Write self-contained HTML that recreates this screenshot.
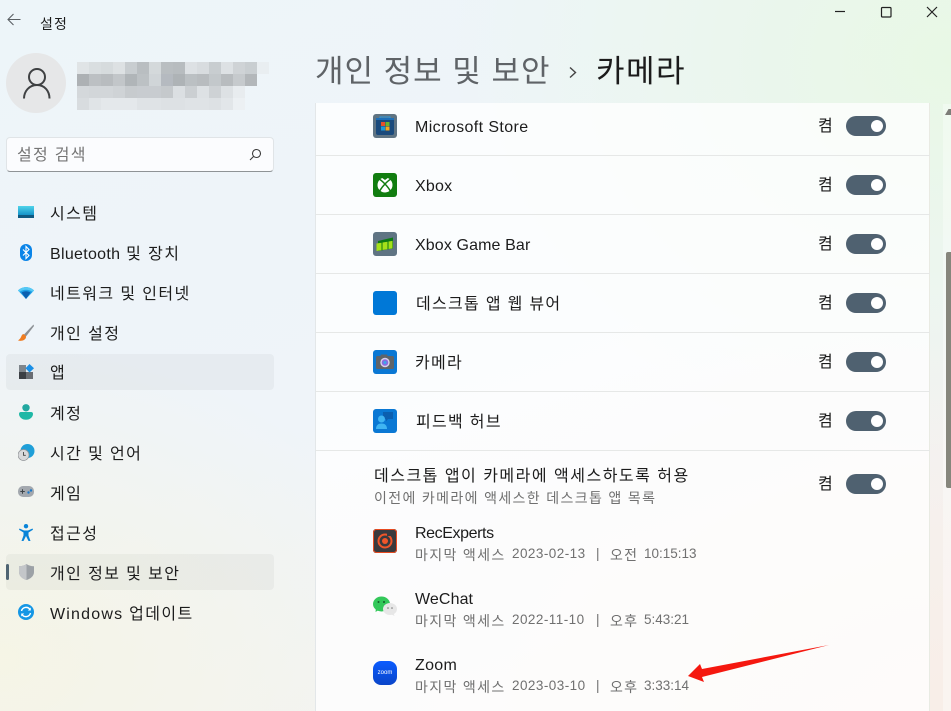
<!DOCTYPE html>
<html lang="ko"><head><meta charset="utf-8"><title>설정</title>
<style>
html,body{margin:0;padding:0}
body{width:951px;height:711px;overflow:hidden;position:relative;font-family:"Liberation Sans","Noto Sans CJK KR",sans-serif;color:#1c1c1c;
background:
radial-gradient(500px 400px at 950px 60px,rgba(232,248,228,.95),rgba(232,248,235,0)),
radial-gradient(420px 320px at 0 660px,rgba(246,245,228,.9),rgba(245,245,225,0)),
radial-gradient(600px 400px at 951px 711px,rgba(248,238,232,1),rgba(248,238,232,0)),
linear-gradient(160deg,#edf5f9 0%,#eff4f9 50%,#f5f2ee 100%);}
.t{position:absolute;white-space:nowrap;line-height:24px;font-size:16px}
.a{position:absolute;display:block}
.nav{left:50px;font-size:16px;letter-spacing:1.4px}
.lab{left:415px;font-size:16px;letter-spacing:1.3px}
.k{left:818px;font-size:16px}
.sub{font-size:13.5px;color:#707070;line-height:20px}
.sk{left:415px;font-size:14px;letter-spacing:1.35px}
.sd{left:512px;letter-spacing:.45px}
.sp{left:596px}
.sa{left:610px;font-size:14px;letter-spacing:1.2px}
.st{left:644px}
.sep{position:absolute;left:316px;width:614px;height:1px;background:#e6e8e7}
.tg{position:absolute;left:846px;width:40px;height:20px;border-radius:10px;background:#4f6170}
.tg:after{content:"";position:absolute;left:25px;top:4px;width:12px;height:12px;border-radius:50%;background:#fff}
.sel{position:absolute;left:6px;width:268px;height:36px;border-radius:4px;background:rgba(0,0,0,.037)}
</style></head><body>

<!-- title bar -->
<svg class="a" style="left:7px;top:13px" width="15" height="13" viewBox="0 0 15 13" fill="none" stroke="#5a5f63" stroke-width="1.1"><path d="M1 6.500H13.500M6.500 1L1 6.500l5.500 5.500"/></svg>
<div class="t" style="left:40px;top:12px;font-size:14px;letter-spacing:1.1px">설정</div>
<svg class="a" style="left:830px;top:0" width="121" height="24" fill="none" stroke="#222" stroke-width="1.2"><path d="M5 11.500H15"/><rect x="51.500" y="7.500" width="9.500" height="9.500" rx="1"/><path d="M97 7l10 10M107 7l-10 10"/></svg>

<!-- user -->
<div class="a" style="left:6px;top:53px;width:60px;height:60px;border-radius:50%;background:#e6e7e8"></div>
<svg class="a" style="left:22px;top:67px" width="30" height="32" viewBox="0 0 30 32" fill="none" stroke="#3f4143" stroke-width="2"><circle cx="15" cy="10" r="8"/><path d="M2 31.500c0-7 5-13.500 13-13.500s12.500 6.500 12.500 13.500"/></svg>
<svg class="a" style="left:77px;top:62px" width="192" height="48" shape-rendering="crispEdges">
<rect width="12" height="12" x="0" y="0" fill="#e0e4e6"/>
<rect x="12" width="12" height="12" fill="#d9dee0"/><rect x="24" width="12" height="12" fill="#d6dbdd"/><rect x="36" width="12" height="12" fill="#dde1e3"/><rect x="48" width="12" height="12" fill="#c8cdd0"/><rect x="60" width="12" height="12" fill="#b9bec1"/><rect x="72" width="12" height="12" fill="#d4d9db"/><rect x="84" width="12" height="12" fill="#b9bec1"/><rect x="96" width="12" height="12" fill="#b7bcbf"/><rect x="108" width="12" height="12" fill="#dde1e4"/><rect x="120" width="12" height="12" fill="#d8dcdf"/><rect x="132" width="12" height="12" fill="#c8cdd0"/><rect x="144" width="12" height="12" fill="#dde1e4"/><rect x="156" width="12" height="12" fill="#cfd3d6"/><rect x="168" width="12" height="12" fill="#c9ced1"/><rect x="180" width="12" height="12" fill="#e9eef1"/>
<g transform="translate(0,12)"><rect x="0" width="12" height="12" fill="#adb1b4"/><rect x="12" width="12" height="12" fill="#bcc0c3"/><rect x="24" width="12" height="12" fill="#b8bcbf"/><rect x="36" width="12" height="12" fill="#c2c6c9"/><rect x="48" width="12" height="12" fill="#b0b5b8"/><rect x="60" width="12" height="12" fill="#bcc1c4"/><rect x="72" width="12" height="12" fill="#d0d5d8"/><rect x="84" width="12" height="12" fill="#b5bac0"/><rect x="96" width="12" height="12" fill="#aeb3b6"/><rect x="108" width="12" height="12" fill="#bbc0c3"/><rect x="120" width="12" height="12" fill="#b8bcbf"/><rect x="132" width="12" height="12" fill="#c3c8cb"/><rect x="144" width="12" height="12" fill="#b8bcbf"/><rect x="156" width="12" height="12" fill="#c6cacd"/><rect x="168" width="12" height="12" fill="#b3b7ba"/></g>
<g transform="translate(0,24)"><rect x="0" width="12" height="12" fill="#d4d8db"/><rect x="12" width="12" height="12" fill="#d2d6d9"/><rect x="24" width="12" height="12" fill="#d2d6d9"/><rect x="36" width="12" height="12" fill="#cfd3d6"/><rect x="48" width="12" height="12" fill="#c7cbce"/><rect x="60" width="12" height="12" fill="#c8ccd0"/><rect x="72" width="12" height="12" fill="#c8ccd0"/><rect x="84" width="12" height="12" fill="#c5c9cc"/><rect x="96" width="12" height="12" fill="#dbdfe2"/><rect x="108" width="12" height="12" fill="#cbcfd2"/><rect x="120" width="12" height="12" fill="#dde1e4"/><rect x="132" width="12" height="12" fill="#ced2d5"/><rect x="144" width="12" height="12" fill="#dde1e4"/><rect x="156" width="12" height="12" fill="#e8ecef"/></g>
<g transform="translate(0,36)"><rect x="0" width="12" height="12" fill="#d8dcdf"/><rect x="12" width="12" height="12" fill="#e0e4e7"/><rect x="24" width="36" height="12" fill="#e4e8eb"/><rect x="60" width="24" height="12" fill="#dfe3e6"/><rect x="84" width="24" height="12" fill="#dde1e4"/><rect x="108" width="24" height="12" fill="#dfe3e6"/><rect x="132" width="12" height="12" fill="#dde1e4"/><rect x="144" width="12" height="12" fill="#e2e6e9"/><rect x="156" width="12" height="12" fill="#ecf0f3"/></g>
</svg>

<!-- search -->
<div class="a" style="left:6px;top:137px;width:266px;height:33px;background:#fbfcfe;border:1px solid #e0e4e7;border-bottom:1px solid #8f9396;border-radius:4px"></div>
<div class="t" style="left:17px;top:144px;font-size:16px;color:#757575;letter-spacing:1.3px">설정 검색</div>
<svg class="a" style="left:249px;top:148px" width="13" height="13" fill="none" stroke="#3a3a3a" stroke-width="1.1"><circle cx="7.500" cy="5.500" r="4"/><path d="M4.500 8.500L1 12"/></svg>

<!-- nav -->
<div class="sel" style="top:354px"></div>
<div class="sel" style="top:554px"></div>
<div class="a" style="left:6px;top:564px;width:3px;height:16px;border-radius:2px;background:#4f6472"></div>

<svg class="a" style="left:18px;top:206px" width="16" height="12"><defs><linearGradient id="g1" x1="0" y1="0" x2="0" y2="1"><stop offset="0" stop-color="#4fd4ea"/><stop offset="1" stop-color="#1593c9"/></linearGradient></defs><rect width="16" height="9" y="0" fill="url(#g1)"/><rect y="9" width="16" height="3" fill="#0f5a82"/></svg>
<div class="t nav" style="top:203px">시스템</div>

<svg class="a" style="left:20px;top:244px" width="13" height="17"><rect width="12" height="17" rx="6" fill="#0a84e8"/><path d="M3 5.500l6 6-3 3V2.500l3 3-6 6" fill="none" stroke="#fff" stroke-width="1.100"/></svg>
<div class="t nav" style="top:243px"><span style="letter-spacing:.3px">Bluetooth</span> 및 장치</div>

<svg class="a" style="left:18px;top:287px" width="16" height="12"><path d="M0 3.500C4 -1 12 -1 16 3.500L8 12z" fill="#1e9fe6"/><path d="M3.500 5.500C6 3.800 10 3.800 12.500 5.500L8 12z" fill="#0b5fb0"/><path d="M0 3.500C4 -1 12 -1 16 3.500l-1.500 1.500C11 2 5 2 1.500 5z" fill="#56c9f5"/></svg>
<div class="t nav" style="top:283px">네트워크 및 인터넷</div>

<svg class="a" style="left:18px;top:324px" width="16" height="17"><path d="M15.500 0.500L6 10.500l2 2L16 2z" fill="#8d9196"/><path d="M5.500 10c-2 .5-2 2.500-3 4-.5 1-1.500 1.500-2.500 2.500 3 .8 6.500.3 7.800-2.500.4-1 .2-2-.3-2.500z" fill="#ef7d22"/></svg>
<div class="t nav" style="top:323px">개인 설정</div>

<svg class="a" style="left:19px;top:364px" width="15" height="15"><rect y="1" width="7" height="7" fill="#7e858b"/><rect y="8" width="7" height="7" fill="#3b3f44"/><rect x="7" y="8" width="7" height="7" fill="#696d72"/><path d="M10.500 0L15 4.300 10.500 8.500 6.500 4.300z" fill="#1a8fe6"/></svg>
<div class="t nav" style="top:362px">앱</div>

<svg class="a" style="left:19px;top:404px" width="15" height="16"><circle cx="7" cy="3.800" r="3.700" fill="#22a8a0"/><path d="M0 10a2 2 0 0 1 2-2h10a2 2 0 0 1 2 2c0 3-3 5.800-7 5.800S0 13 0 10z" fill="#1fb8a6"/></svg>
<div class="t nav" style="top:403px">계정</div>

<svg class="a" style="left:18px;top:444px" width="17" height="17"><circle cx="9.500" cy="7" r="7" fill="#1f9fd8"/><circle cx="5.500" cy="11" r="5.500" fill="#d8d9db" stroke="#8f9296" stroke-width=".7"/><path d="M5.500 8v3.300h2.300" fill="none" stroke="#444" stroke-width=".9"/></svg>
<div class="t nav" style="top:443px">시간 및 언어</div>

<svg class="a" style="left:18px;top:486px" width="16" height="11"><rect width="16" height="11" rx="5" fill="#a3a8ae"/><path d="M4.500 3.200v4.500M2.300 5.500h4.500" stroke="#3d4347" stroke-width="1"/><circle cx="10.500" cy="6.500" r="1.200" fill="#1b78c8"/><circle cx="13" cy="4.500" r="1.200" fill="#1b78c8"/></svg>
<div class="t nav" style="top:483px">게임</div>

<svg class="a" style="left:19px;top:524px" width="14" height="17"><circle cx="7" cy="2.200" r="2.200" fill="#0a84d8"/><path d="M0.500 4.500L5 6.500h4l4.500-2 .5 1.300L9.500 8.500v3l2 5.500H9.500L7 12l-2.500 5H2.500l2-5.500v-3L0 5.800z" fill="#0a84d8"/></svg>
<div class="t nav" style="top:523px">접근성</div>

<svg class="a" style="left:19px;top:564px" width="15" height="16"><path d="M7.500 0C9.500 1.500 12 2.200 15 2.300V8c0 4-3.300 6.700-7.500 8C3.300 14.700 0 12 0 8V2.300C3 2.200 5.500 1.500 7.500 0z" fill="#9ca1a6"/><path d="M7.500 0C5.500 1.500 3 2.200 0 2.300V8c0 4 3.300 6.700 7.500 8z" fill="#c3c6c9"/></svg>
<div class="t nav" style="top:563px">개인 정보 및 보안</div>

<svg class="a" style="left:18px;top:604px" width="16" height="16" fill="none"><circle cx="8" cy="8" r="8" fill="#1597e5"/><path d="M3.500 7A4.700 4.700 0 0 1 12 5.500M12.500 9A4.700 4.700 0 0 1 4 10.500" stroke="#fff" stroke-width="1.400"/><path d="M12.800 3.500v3h-3zM3.200 12.500v-3h3z" fill="#fff"/></svg>
<div class="t nav" style="top:603px"><span style="letter-spacing:1.2px">Windows</span> 업데이트</div>

<!-- header -->
<div class="t" style="left:315px;top:50px;font-size:31px;line-height:44px;color:#5f6367;letter-spacing:1px">개인 정보 및 보안</div>
<svg class="a" style="left:568px;top:66px" width="10" height="13" fill="none" stroke="#444" stroke-width="1.400"><path d="M2 1.500L7.500 6.500 2 11.500"/></svg>
<div class="t" style="left:596px;top:50px;font-size:31px;line-height:44px;color:#1b1b1b;letter-spacing:1.500px">카메라</div>

<!-- card -->
<div class="a" style="left:315px;top:103px;width:615px;height:608px;background:rgba(255,255,255,.76);box-shadow:inset 1px 0 0 #e3e7e9,inset -1px 0 0 #e9ebe3"></div>
<div class="sep" style="top:155px"></div><div class="sep" style="top:214px"></div><div class="sep" style="top:273px"></div><div class="sep" style="top:332px"></div><div class="sep" style="top:391px"></div><div class="sep" style="top:450px"></div>

<!-- row 1 store -->
<svg class="a" style="left:373px;top:114px" width="24" height="24"><rect width="24" height="24" rx="3" fill="#5f7483"/><rect x="3" y="4" width="18" height="17" rx="2" fill="#1a4a7c"/><path d="M7 5V3h10v2" fill="none" stroke="#2a9ae0" stroke-width="1"/><rect x="3" y="4" width="18" height="2" fill="#1d6fb8"/><rect x="8" y="8" width="4" height="4" fill="#e8502a"/><rect x="12.500" y="8" width="4" height="4" fill="#6cb52d"/><rect x="8" y="12.500" width="4" height="4" fill="#1d9ad6"/><rect x="12.500" y="12.500" width="4" height="4" fill="#f5a81c"/></svg>
<div class="t lab" style="top:116px;letter-spacing:.4px">Microsoft Store</div><div class="t k" style="top:115px">켬</div><div class="tg" style="top:116px"></div>

<!-- row 2 xbox -->
<svg class="a" style="left:373px;top:173px" width="24" height="24"><rect width="24" height="24" rx="3" fill="#117d10"/><circle cx="12" cy="12" r="7.500" fill="#fff"/><path d="M6 6c3 1.500 9.500 8 11.500 12.500M18 6C15 7.500 8.500 14 6.500 18.500" fill="none" stroke="#117d10" stroke-width="1.500"/><path d="M8.500 4.500h7L12 7z" fill="#117d10"/></svg>
<div class="t lab" style="top:175px;letter-spacing:.2px">Xbox</div><div class="t k" style="top:174px">켬</div><div class="tg" style="top:175px"></div>

<!-- row 3 game bar -->
<svg class="a" style="left:373px;top:232px" width="24" height="24"><rect width="24" height="24" rx="3" fill="#5f7483"/><path d="M5 9L20 5.500v11L5 19z" fill="#0c7a12"/><path d="M3.500 11.500l5-.8v7.500l-5 .8zM9.500 10.500l5-.8v7.500l-5 .8zM15.500 9.500l4-.6v7.500l-4 .6z" fill="#a5e01a"/></svg>
<div class="t lab" style="top:234px;letter-spacing:.12px">Xbox Game Bar</div><div class="t k" style="top:233px">켬</div><div class="tg" style="top:234px"></div>

<!-- row 4 webview -->
<div class="a" style="left:373px;top:291px;width:24px;height:24px;border-radius:3px;background:#0078d7"></div>
<div class="t lab" style="top:293px;left:416px">데스크톱 앱 웹 뷰어</div><div class="t k" style="top:292px">켬</div><div class="tg" style="top:293px"></div>

<!-- row 5 camera -->
<svg class="a" style="left:373px;top:350px" width="24" height="24"><rect width="24" height="24" rx="3" fill="#0a78d4"/><rect x="3" y="6" width="18" height="13" rx="1.500" fill="#5f6469"/><rect x="7.500" y="4.500" width="7" height="3" rx="1" fill="#5f6469"/><circle cx="12" cy="12.500" r="4.700" fill="#d9d2e8"/><circle cx="12" cy="12.500" r="3.300" fill="#8a6be0"/><circle cx="12" cy="12.500" r="1.500" fill="#3ca8e8"/></svg>
<div class="t lab" style="top:352px">카메라</div><div class="t k" style="top:351px">켬</div><div class="tg" style="top:352px"></div>

<!-- row 6 feedback -->
<svg class="a" style="left:373px;top:409px" width="24" height="24"><rect width="24" height="24" rx="3" fill="#0a78d4"/><path d="M10 3h10v7h-5l-2 2.500V10h-3z" fill="#0b5fb0"/><circle cx="8.500" cy="10" r="3.500" fill="#3fb4f2"/><path d="M3 20c0-4 2.500-5.500 5.500-5.500S14 16 14 20z" fill="#3fb4f2"/></svg>
<div class="t lab" style="top:411px;left:416px">피드백 허브</div><div class="t k" style="top:410px">켬</div><div class="tg" style="top:411px"></div>

<!-- desktop apps -->
<div class="t" style="left:374px;top:465px;font-size:16px;letter-spacing:1.500px">데스크톱 앱이 카메라에 액세스하도록 허용</div>
<div class="t" style="left:374px;top:488px;font-size:14px;line-height:20px;color:#707070;letter-spacing:1.350px">이전에 카메라에 액세스한 데스크톱 앱 목록</div>
<div class="t k" style="top:473px">켬</div><div class="tg" style="top:474px"></div>

<svg class="a" style="left:373px;top:529px" width="24" height="24"><rect width="24" height="24" rx="3" fill="#3a3a3e"/><rect x=".5" y=".5" width="23" height="23" rx="3" fill="none" stroke="#e84a20"/><circle cx="12" cy="12" r="6.500" fill="none" stroke="#f0562a" stroke-width="2"/><circle cx="12" cy="12" r="3" fill="#f0562a"/><rect x="14" y="3" width="4" height="4" fill="#3a3a3e"/></svg>
<div class="t lab" style="top:522px;letter-spacing:-.4px">RecExperts</div>
<div class="t sub sk" style="top:545px">마지막 액세스</div><div class="t sub sd" style="top:544px">2023-02-13</div><div class="t sub sp" style="top:544px">|</div><div class="t sub sa" style="top:545px">오전</div><div class="t sub st" style="top:544px">10:15:13</div>

<svg class="a" style="left:373px;top:596px" width="24" height="22"><ellipse cx="8.500" cy="8" rx="8.500" ry="7.500" fill="#33c85a"/><path d="M3 12l-.5 4 4-2.500z" fill="#33c85a"/><circle cx="5.500" cy="6" r="1" fill="#155c2a"/><circle cx="11" cy="6" r="1" fill="#155c2a"/><ellipse cx="17" cy="13" rx="7" ry="6" fill="#e7e7e7"/><path d="M20.500 17l1 3-4-2z" fill="#e7e7e7"/><circle cx="15" cy="12" r=".8" fill="#777"/><circle cx="19" cy="12" r=".8" fill="#777"/></svg>
<div class="t lab" style="top:588px;letter-spacing:.1px">WeChat</div>
<div class="t sub sk" style="top:611px">마지막 액세스</div><div class="t sub sd" style="top:610px">2022-11-10</div><div class="t sub sp" style="top:610px">|</div><div class="t sub sa" style="top:611px">오후</div><div class="t sub st" style="top:610px">5:43:21</div>

<div class="a" style="left:373px;top:661px;width:24px;height:24px;border-radius:8px;background:linear-gradient(#0b5cff,#0a45c8)"></div>
<div class="t" style="left:373px;top:662px;width:24px;text-align:center;font-size:6px;line-height:22px;color:#fff">zoom</div>
<div class="t lab" style="top:654px;letter-spacing:.3px">Zoom</div>
<div class="t sub sk" style="top:677px">마지막 액세스</div><div class="t sub sd" style="top:676px">2023-03-10</div><div class="t sub sp" style="top:676px">|</div><div class="t sub sa" style="top:677px">오후</div><div class="t sub st" style="top:676px">3:33:14</div>

<!-- arrow -->
<svg class="a" style="left:0;top:0" width="951" height="711"><polygon points="829,645 702,669 700,664 688,676 704,682 702,677" fill="#f5180f"/></svg>

<!-- scrollbar -->
<div class="a" style="left:943px;top:104px;width:8px;height:607px;background:rgba(255,255,255,.35)"></div>
<svg class="a" style="left:945px;top:109px" width="6" height="6"><path d="M0 6L3.500 0H6V6z" fill="#7d7d78"/></svg>
<div class="a" style="left:946px;top:252px;width:5px;height:236px;background:#86867c;border-radius:2px 0 0 2px"></div>
</body></html>
